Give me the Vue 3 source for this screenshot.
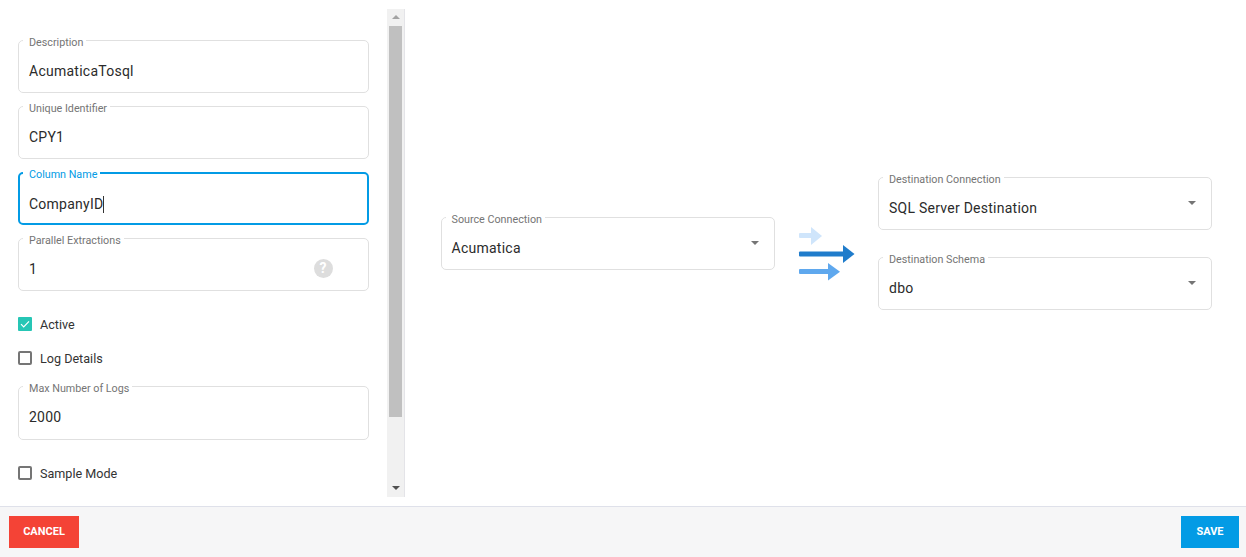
<script setup>
const topFields = [
  { label: 'Description', value: 'AcumaticaTosql' },
  { label: 'Unique Identifier', value: 'CPY1' },
  { label: 'Column Name', value: 'CompanyID', focused: true },
  { label: 'Parallel Extractions', value: '1', help: true }
]
</script>

<template>
  <div class="page">
    <main class="main">
      <section class="left">
        <div class="form">
          <div class="stack">
            <fieldset v-for="f in topFields" :key="f.label" class="field" :class="{ focused: f.focused }">
              <legend>{{ f.label }}</legend>
              <div class="value">
                <span>{{ f.value }}<i v-if="f.focused" class="caret"></i></span>
                <span v-if="f.help" class="help">?</span>
              </div>
            </fieldset>
          </div>
          <label class="check first"><span class="box on">
            <svg width="14" height="14" viewBox="0 0 14 14"><path d="M3 7.2l2.700 2.700L11 4.300" fill="none" stroke="#fff" stroke-width="1.200"/></svg>
          </span>Active</label>
          <label class="check second"><span class="box"></span>Log Details</label>
          <fieldset class="field max">
            <legend>Max Number of Logs</legend>
            <div class="value"><span>2000</span></div>
          </fieldset>
          <label class="check third"><span class="box"></span>Sample Mode</label>
        </div>
        <div class="scrollbar">
          <span class="up"></span>
          <span class="thumb"></span>
          <span class="down"></span>
        </div>
      </section>
      <section class="right">
        <fieldset class="field select">
          <legend>Source Connection</legend>
          <div class="value"><span>Acumatica</span><i class="tri"></i></div>
        </fieldset>
        <svg class="arrows" width="57" height="55" viewBox="0 0 57 55">
          <g fill="#cfe5fb"><rect x="1" y="6" width="14" height="5" rx="1"/><path d="M13 0l11 9-11 9z"/></g>
          <g fill="#1f7ccb"><rect x="1" y="24.500" width="45" height="5" rx="1"/><path d="M45 18l11.500 9-11.500 9z"/></g>
          <g fill="#5fa8ee"><rect x="1" y="42" width="31" height="5" rx="1"/><path d="M30 36l12 8.800-12 8.800z"/></g>
        </svg>
        <div class="dest">
          <fieldset class="field select">
            <legend>Destination Connection</legend>
            <div class="value"><span>SQL Server Destination</span><i class="tri"></i></div>
          </fieldset>
          <fieldset class="field select">
            <legend>Destination Schema</legend>
            <div class="value"><span>dbo</span><i class="tri"></i></div>
          </fieldset>
        </div>
      </section>
    </main>
    <footer class="footer">
      <button class="btn cancel">CANCEL</button>
      <button class="btn save">SAVE</button>
    </footer>
  </div>
</template>

<style>
html, body { margin: 0; background: #fff; }
</style>

<style scoped>
.page {
  width: 1246px;
  height: 557px;
  display: flex;
  flex-direction: column;
  font-family: Roboto, "Liberation Sans", sans-serif;
  color: #2b2b2b;
  overflow: hidden;
}
.main { flex: 1; display: flex; align-items: flex-start; padding-top: 9px; min-height: 0; }
.left { width: 405px; height: 488px; display: flex; flex: none; }
.form { flex: 1; padding: 23px 18px 0; box-sizing: border-box; min-width: 0; }
.stack { display: flex; flex-direction: column; gap: 5px; }
.field {
  margin: 0;
  padding: 0 10px;
  box-sizing: border-box;
  width: 100%;
  height: 61px;
  border: 1px solid #e0e0e0;
  border-radius: 5px;
  min-width: 0;
}
.field legend {
  font-size: 10.75px;
  line-height: 13px;
  color: #757575;
  padding: 4px 3px 0 6px;
  margin-left: -6px;
}
.field.focused { border: 2px solid #039be5; padding: 0 9px; }
.field.focused legend { color: #039be5; }
.field.focused .value { margin-top: 2px; }
.value {
  display: flex;
  align-items: center;
  justify-content: space-between;
  height: 43px;
  font-size: 14px;
  letter-spacing: 0.25px;
}
.caret {
  display: inline-block;
  width: 1px;
  height: 17px;
  background: #333;
  vertical-align: -4px;
}
.help {
  width: 19px;
  height: 19px;
  margin-right: 25.5px;
  border-radius: 50%;
  background: #ddd;
  color: #fff;
  font-size: 14px;
  font-weight: 700;
  line-height: 19px;
  text-align: center;
}
.check {
  display: flex;
  align-items: center;
  gap: 8px;
  height: 16px;
  font-size: 12.6px;
  color: #333;
}
.first { margin-top: 25px; }
.second { margin-top: 18px; }
.third { margin-top: 25px; }
.max { margin-top: 12px; height: 62px; }
.box {
  width: 14px;
  height: 14px;
  box-sizing: border-box;
  border: 2px solid #757575;
  border-radius: 2px;
  flex: none;
}
.box.on { border: 0; background: #26c6b5; border-radius: 1px; }
.box svg { display: block; }
.scrollbar {
  width: 17px;
  flex: none;
  background: #f1f1f1;
  border-right: 1px solid #e4e4e8;
  display: flex;
  flex-direction: column;
  align-items: center;
}
.up, .down { width: 0; height: 0; border-left: 4px solid transparent; border-right: 4px solid transparent; }
.up { border-bottom: 4px solid #a3a3a3; margin: 6px 0 7px; }
.thumb { width: 13px; height: 391px; background: #c0c0c0; }
.down { border-top: 4px solid #505050; margin-top: 69px; }
.right {
  flex: 1;
  height: 488px;
  padding: 0 0 27px 35.5px;
  box-sizing: border-box;
  display: flex;
  align-items: center;
}
.select { width: 334px; flex: none; }
.arrows { margin: 30px 23px 0 23.5px; flex: none; }
.dest { display: flex; flex-direction: column; gap: 19px; }
.tri {
  width: 0;
  height: 0;
  margin: 0 5px 10px 0;
  border-left: 4.5px solid transparent;
  border-right: 4.5px solid transparent;
  border-top: 4.5px solid #757575;
}
.footer {
  height: 51px;
  box-sizing: border-box;
  flex: none;
  border-top: 1px solid #dfe1ea;
  background: #f6f6f7;
  display: flex;
  justify-content: space-between;
  align-items: flex-start;
  padding: 9px 7px 0 9px;
}
.btn {
  height: 32px;
  border: 0;
  padding: 0 0 2px;
  color: #fff;
  font-family: inherit;
  font-size: 11px;
  font-weight: 700;
}
.cancel { width: 70px; background: #f44336; }
.save { width: 58px; background: #039be5; }
</style>
